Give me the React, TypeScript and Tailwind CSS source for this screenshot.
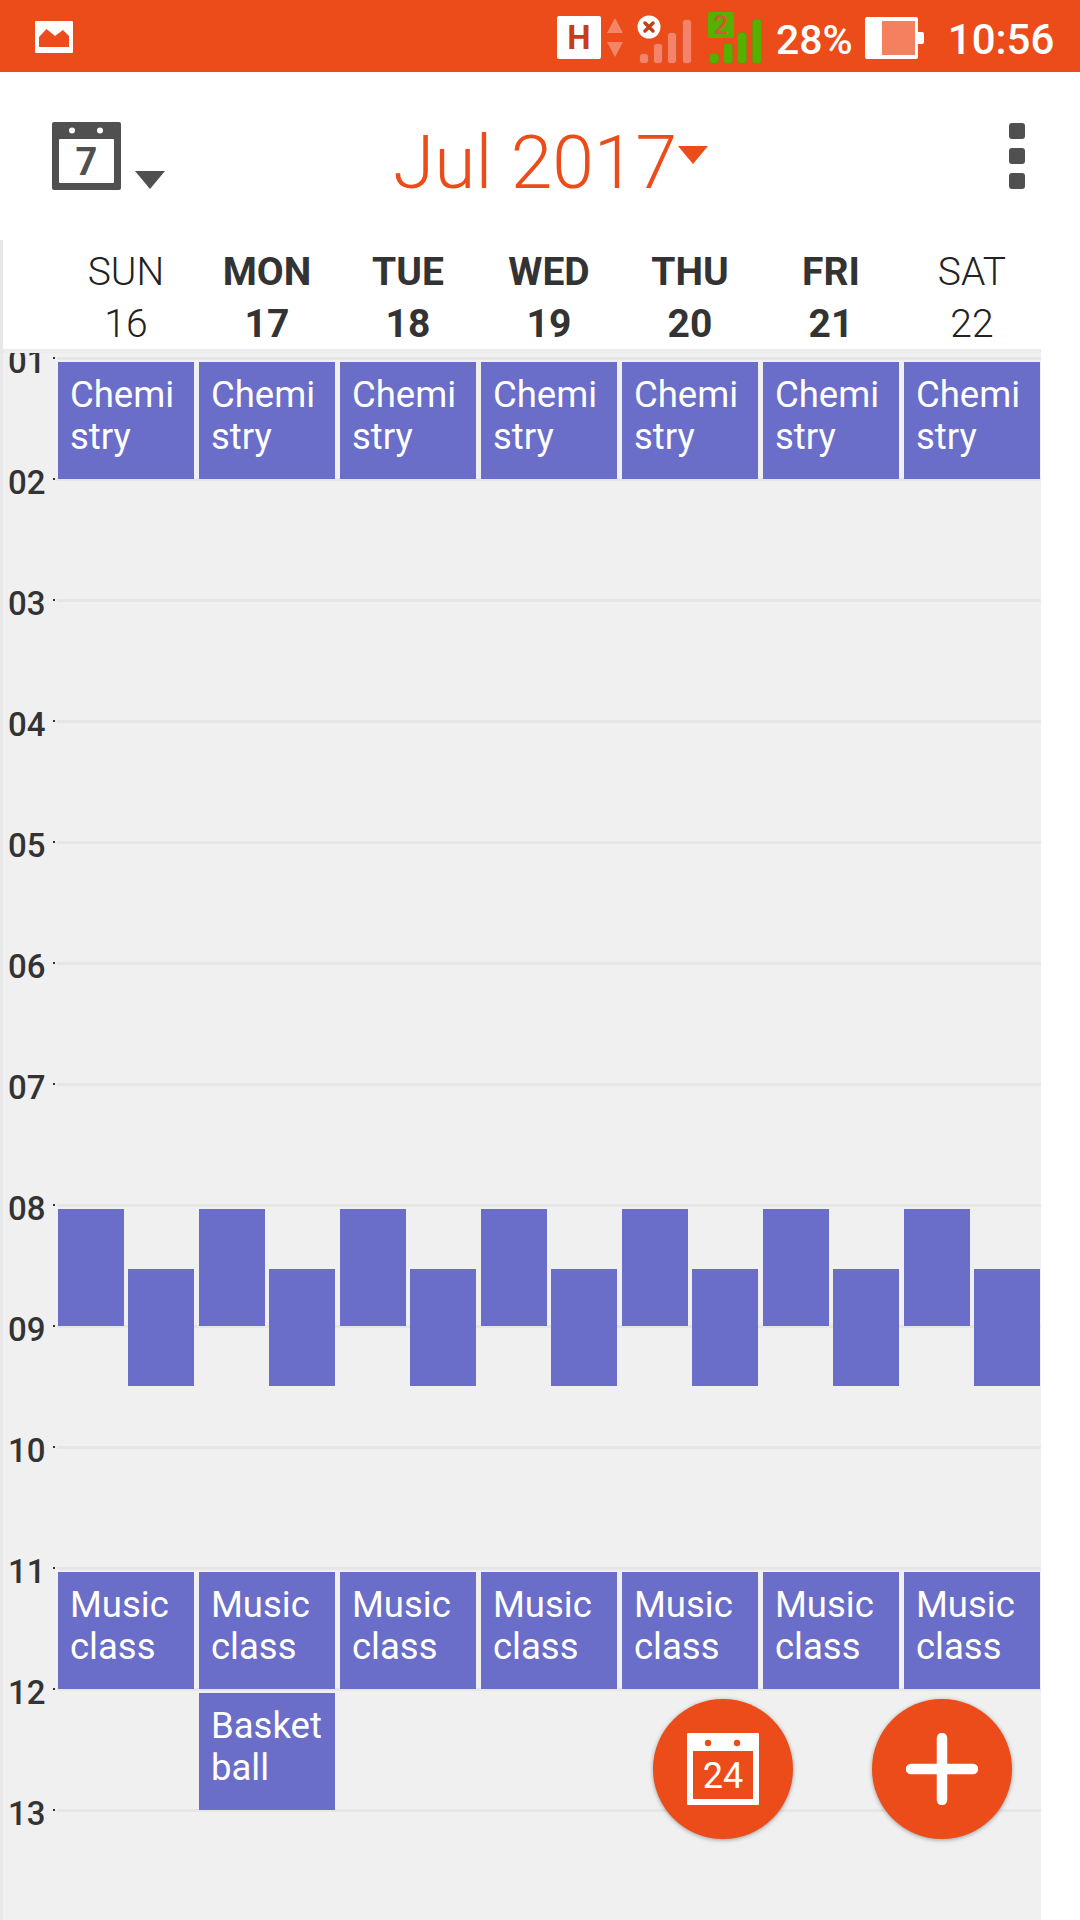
const DAYS = [
  { name: "SUN", num: 16, bold: false },
  { name: "MON", num: 17, bold: true },
  { name: "TUE", num: 18, bold: true },
  { name: "WED", num: 19, bold: true },
  { name: "THU", num: 20, bold: true },
  { name: "FRI", num: 21, bold: true },
  { name: "SAT", num: 22, bold: false },
];

const HOURS = ["01", "02", "03", "04", "05", "06", "07", "08", "09", "10", "11", "12", "13"];

const HOUR_H = 121;
const GRID_TOP = 13;

type Ev = { title?: string; start: number; slot?: "left" | "right" };

const WEEK_EVENTS: Ev[] = [
  { title: "Chemistry", start: 1 },
  { start: 8, slot: "left" },
  { start: 8.5, slot: "right" },
  { title: "Music class", start: 11 },
];

function EventBlock({ ev }: { ev: Ev }) {
  const top = Math.floor(GRID_TOP + (ev.start - 1) * HOUR_H);
  const left = ev.slot === "right" ? 70 : 0;
  const width = ev.slot ? 66 : 136;
  return (
    <div
      className="absolute h-[117px] bg-[#6a6ec9] pl-[12px] pr-[13px] pt-[12px] text-[36.5px] leading-[42px] text-white break-all"
      style={{ top, left, width }}
    >
      {ev.title}
    </div>
  );
}

function Signal({ color, outline }: { color: string; outline: string }) {
  const bars = [
    { x: 0, y: 34 },
    { x: 14, y: 24 },
    { x: 28, y: 13 },
    { x: 43, y: 0 },
  ];
  return (
    <svg width="54" height="45" viewBox="0 0 54 45">
      {bars.map(b => (
        <rect key={b.x} x={b.x + 0.5} y={b.y + 0.5} width="9" height={44 - b.y} rx="3" fill={color} stroke={outline} strokeWidth="1" />
      ))}
    </svg>
  );
}

function StatusBar() {
  return (
    <div className="flex h-[72px] items-start bg-[#eb4c1a] font-['Roboto',sans-serif] text-white">
      {/* gallery notification */}
      <svg className="ml-[35px] mt-[21px]" width="38" height="32" viewBox="0 0 38 32">
        <rect width="38" height="32" rx="1" fill="#fff" />
        <path d="M4 26V16l7.5-8 8.5 7 8-6 6 6v11z" fill="#eb4c1a" />
      </svg>

      {/* H data badge */}
      <div className="ml-[484px] mt-[16px] flex h-[43px] w-[44px] items-center justify-center rounded-[2px] bg-white text-[33px] leading-none font-bold text-[#c43f17]">
        H
      </div>
      <svg className="ml-[6px] mt-[18px]" width="16" height="39" viewBox="0 0 16 39">
        <path d="M8 0l8 15H0z" fill="#f58468" />
        <path d="M0 24h16L8 39z" fill="#f58468" />
      </svg>

      {/* sim 1, no service */}
      <div className="relative ml-[16px] mt-[19px]">
        <Signal color="#f5836a" outline="#d9572e" />
        <svg className="absolute left-[-2px] top-[-4px]" width="24" height="24" viewBox="0 0 24 24">
          <circle cx="12" cy="12" r="11.5" fill="#fff" />
          <path d="M8 8l8 8M16 8l-8 8" stroke="#c43f17" strokeWidth="3.5" strokeLinecap="round" />
        </svg>
      </div>

      {/* sim 2 */}
      <div className="relative ml-[16px] mt-[19px]">
        <Signal color="#55b000" outline="#7b8a0c" />
        <div className="absolute left-[-1px] top-[-7px] flex size-[26px] items-center justify-center rounded-[2px] bg-[#55b000] text-[26px] leading-none font-medium text-[#d9572e]">
          2
        </div>
      </div>

      <div className="ml-[13px] mt-[16px] text-[41px] leading-[48px] font-medium">28%</div>

      {/* battery */}
      <div className="ml-[12px] mt-[17px] flex items-center">
        <div className="flex h-[42px] w-[53px] justify-end rounded-[2px] bg-white pr-[3px] pt-[4px]">
          <div className="h-[34px] w-[33px] bg-[#f58060]" />
        </div>
        <div className="h-[12px] w-[6px] rounded-r-[2px] bg-white" />
      </div>

      <div className="ml-[24px] mt-[16px] text-[42px] leading-[48px] font-medium">10:56</div>
    </div>
  );
}

function TopBar() {
  return (
    <div className="flex h-[168px] items-start bg-white font-['Roboto',sans-serif]">
      <svg className="ml-[52px] mt-[50px]" width="69" height="68" viewBox="0 0 69 68">
        <rect width="69" height="68" rx="2" fill="#505050" />
        <rect x="7" y="17" width="55" height="44" rx="1" fill="#fff" />
        <circle cx="20" cy="8.5" r="3" fill="#fff" />
        <circle cx="48" cy="8.5" r="3" fill="#fff" />
        <text x="34.5" y="53" textAnchor="middle" fontFamily="Roboto, sans-serif" fontSize="38" fontWeight="700" fill="#505050">7</text>
      </svg>
      <svg className="ml-[14px] mt-[99px]" width="30" height="18" viewBox="0 0 30 18">
        <path d="M0 0h30L15 18z" fill="#505050" />
      </svg>
      <div className="ml-[228px] mt-[48px] text-[75px] leading-[84px] font-light text-[#eb4c1a]">Jul 2017</div>
      <svg className="ml-[1px] mt-[74px]" width="30" height="18" viewBox="0 0 30 18">
        <path d="M0 0h30L15 18z" fill="#eb4c1a" />
      </svg>
      <div className="ml-auto mr-[55px] mt-[51px] flex flex-col gap-[9px]">
        <div className="size-[16px] rounded-[3px] bg-[#505050]" />
        <div className="size-[16px] rounded-[3px] bg-[#505050]" />
        <div className="size-[16px] rounded-[3px] bg-[#505050]" />
      </div>
    </div>
  );
}

function WeekHeader() {
  return (
    <div className="h-[109px] border-l-[3px] border-[#e8e8e8] bg-white pl-[55px] pt-[6px] font-['Roboto',sans-serif]">
      <div className="grid w-[982px] grid-cols-7 gap-x-[5px]">
        {DAYS.map(d => (
          <div
            key={d.name}
            className={`text-center text-[39px] leading-[52px] ${d.bold ? "font-bold text-[#333333]" : "font-light text-[#222222]"}`}
          >
            <div>{d.name}</div>
            <div>{d.num}</div>
          </div>
        ))}
      </div>
    </div>
  );
}

function HourGrid() {
  return (
    <div className="relative h-[1571px] w-[1041px] overflow-hidden border-l-[3px] border-[#e8e8e8] bg-[#f0f0f0] pt-[8px] font-['Roboto',sans-serif]">
      {HOURS.map(h => (
        <div key={h} className="flex h-[121px] items-start">
          <div className="-mt-[15px] h-[40px] w-[50px] pl-[5px] text-[33px] leading-[40px] font-medium text-[#333333]">{h}</div>
          <div className="size-[2px] bg-[#333333]" />
          <div className="ml-[2px] h-[3px] flex-1 bg-[#e6e6e6]" />
        </div>
      ))}

      {/* the header's edge clips the first label */}
      <div className="absolute left-0 top-0 h-[4px] w-full bg-[#ececec]" />

      {/* events over the hour lines */}
      <div className="absolute left-[55px] top-0 grid h-full w-[982px] grid-cols-7 gap-x-[5px]">
        {DAYS.map(d => (
          <div key={d.name} className="relative">
            {WEEK_EVENTS.map(ev => (
              <EventBlock key={ev.start} ev={ev} />
            ))}
            {d.name === "MON" && <EventBlock ev={{ title: "Basketball", start: 12 }} />}
          </div>
        ))}
      </div>
    </div>
  );
}

export default function App() {
  return (
    <div className="relative h-[1920px] w-[1080px] overflow-hidden bg-white">
      <StatusBar />
      <TopBar />
      <WeekHeader />
      <HourGrid />

      {/* floating buttons */}
      <div className="absolute left-[653px] top-[1699px] flex gap-[79px]">
        <button className="flex size-[140px] items-center justify-center rounded-full bg-[#eb4c1a] shadow-[0_1px_4px_rgba(0,0,0,0.35)]">
          <svg width="72" height="72" viewBox="0 0 72 72">
            <rect width="72" height="72" rx="1" fill="#fff" />
            <rect x="6" y="18" width="60" height="48" fill="#eb4c1a" />
            <circle cx="21" cy="10" r="3.2" fill="#eb4c1a" />
            <circle cx="50" cy="10" r="3.2" fill="#eb4c1a" />
            <text x="36" y="55" textAnchor="middle" fontFamily="Roboto, sans-serif" fontSize="36" fill="#fff">24</text>
          </svg>
        </button>
        <button className="flex size-[140px] items-center justify-center rounded-full bg-[#eb4c1a] shadow-[0_1px_4px_rgba(0,0,0,0.35)]">
          <svg width="72" height="72" viewBox="0 0 72 72">
            <path d="M36 5v62M5 36h62" stroke="#fff" strokeWidth="10.5" strokeLinecap="round" />
          </svg>
        </button>
      </div>
    </div>
  );
}
